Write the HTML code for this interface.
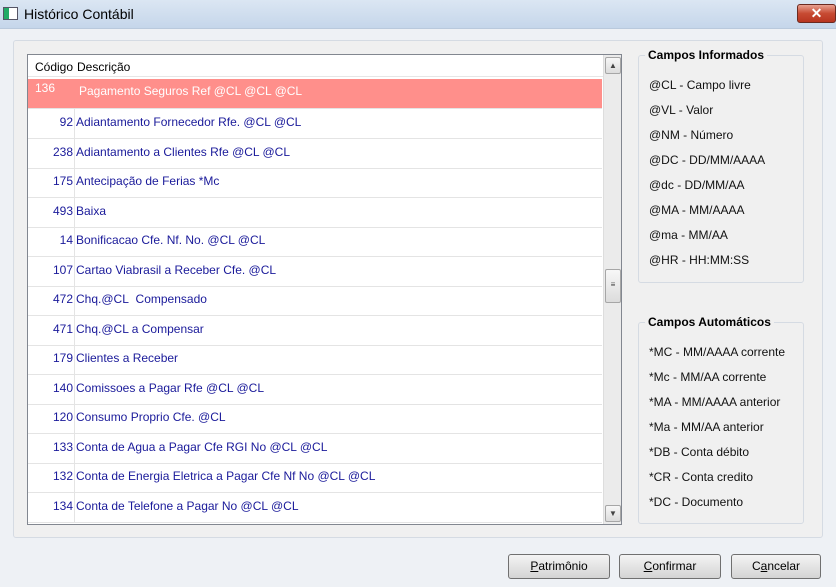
<!DOCTYPE html>
<html><head><meta charset="utf-8"><style>
*{margin:0;padding:0;box-sizing:border-box}
body{width:836px;height:587px;overflow:hidden;background:#f0f0f0;font-family:"Liberation Sans",sans-serif;font-size:12px;position:relative}
.title{position:absolute;left:0;top:0;width:836px;height:29px;background:linear-gradient(#dbe6f3,#c5d6ea);border-bottom:1px solid #b9c9dc}
.title span{position:absolute;left:24px;top:6px;font-size:14px;color:#000}
.ico{position:absolute;left:3px;top:7px;width:15px;height:13px;border:1px solid #556;background:linear-gradient(90deg,#2a6 0 40%,#fff 40%)}
.close{position:absolute;left:797px;top:4px;width:39px;height:19px;border:1px solid #6b2a20;border-radius:3px;background:linear-gradient(#e8a090,#c74a32 50%,#b83520);color:#fff;text-align:center;font-weight:bold;font-size:14px;line-height:17px}
.main{position:absolute;left:0;top:29px;width:836px;height:558px;background:#eef1f5}
.grp{position:absolute;left:13px;top:40px;width:810px;height:498px;border:1px solid #d5dbe3;border-radius:3px;background:#f0f0f0}
.grid{position:absolute;left:27px;top:54px;width:595px;height:471px;border:1px solid #828790;background:#fff;overflow:hidden}
.hdr{position:absolute;left:0;top:2px;height:20px;width:575px;line-height:20px;border-bottom:1px solid #e6e6e6}
.row{position:absolute;left:0;width:574px;height:30px;border-bottom:1px solid #e4e4e4;color:#1a1a9a;font-size:12px}
.row .c{position:absolute;left:0;width:45px;text-align:right;top:6px}
.row .d{position:absolute;left:48px;top:6px}
.row .sep{position:absolute;left:46px;top:0;height:30px;border-left:1px solid #e4e4e4}
.sel{background:#ff8f8b;color:#fff}
.sb{position:absolute;left:575px;top:0;width:18px;height:469px;background:#ebebeb;border-left:1px solid #ddd}
.sbb{position:absolute;left:1px;width:16px;height:17px;border:1px solid #a6a6a6;background:linear-gradient(#f7f7f7,#dcdcdc);border-radius:2px;font-size:8px;text-align:center;line-height:15px;color:#444}
.gb{position:absolute;left:638px;width:166px;border:1px solid #d5dbe3;border-radius:3px}
.gb h{position:absolute;left:6px;top:-8px;background:#f0f0f0;padding:0 3px;font-weight:bold;font-size:12px}
.gb p{position:absolute;left:10px;font-size:12px;color:#111}
.btn{position:absolute;top:554px;height:25px;border:1px solid #707070;border-radius:3px;background:linear-gradient(#f4f4f4,#e4e4e4 50%,#d4d4d4);text-align:center;line-height:23px;font-size:12px}
</style></head><body>
<div class="title"><div class="ico"></div><span>Histórico Contábil</span><div class="close">✕</div></div>
<div class="main"></div>
<div class="grp"></div>
<div class="grid">
<div class="hdr"><span style="position:absolute;left:7px">Código</span><span style="position:absolute;left:49px">Descrição</span></div>
<div class="row sel" style="top:24px"><span class="c" style="left:7px;width:auto;top:2px;text-align:left;color:#fff">136</span><span class="d" style="left:51px;top:5px;color:#fff">Pagamento Seguros Ref @CL @CL @CL</span></div>
<div class="row" style="top:54px"><span class="sep"></span><span class="c">92</span><span class="d">Adiantamento Fornecedor Rfe. @CL @CL</span></div>
<div class="row" style="top:84px"><span class="sep"></span><span class="c">238</span><span class="d">Adiantamento a Clientes Rfe @CL @CL</span></div>
<div class="row" style="top:113px"><span class="sep"></span><span class="c">175</span><span class="d">Antecipação de Ferias *Mc</span></div>
<div class="row" style="top:143px"><span class="sep"></span><span class="c">493</span><span class="d">Baixa</span></div>
<div class="row" style="top:172px"><span class="sep"></span><span class="c">14</span><span class="d">Bonificacao Cfe. Nf. No. @CL @CL</span></div>
<div class="row" style="top:202px"><span class="sep"></span><span class="c">107</span><span class="d">Cartao Viabrasil a Receber Cfe. @CL</span></div>
<div class="row" style="top:231px"><span class="sep"></span><span class="c">472</span><span class="d">Chq.@CL&nbsp; Compensado</span></div>
<div class="row" style="top:261px"><span class="sep"></span><span class="c">471</span><span class="d">Chq.@CL a Compensar</span></div>
<div class="row" style="top:290px"><span class="sep"></span><span class="c">179</span><span class="d">Clientes a Receber</span></div>
<div class="row" style="top:320px"><span class="sep"></span><span class="c">140</span><span class="d">Comissoes a Pagar Rfe @CL @CL</span></div>
<div class="row" style="top:349px"><span class="sep"></span><span class="c">120</span><span class="d">Consumo Proprio Cfe. @CL</span></div>
<div class="row" style="top:379px"><span class="sep"></span><span class="c">133</span><span class="d">Conta de Agua a Pagar Cfe RGI No @CL @CL</span></div>
<div class="row" style="top:408px"><span class="sep"></span><span class="c">132</span><span class="d">Conta de Energia Eletrica a Pagar Cfe Nf No @CL @CL</span></div>
<div class="row" style="top:438px"><span class="sep"></span><span class="c">134</span><span class="d">Conta de Telefone a Pagar No @CL @CL</span></div>
<div class="sb"><div class="sbb" style="top:2px">▲</div><div class="sbb" style="top:214px;height:34px;line-height:30px">≡</div><div class="sbb" style="top:450px">▼</div></div>
</div>
<div class="gb" style="top:55px;height:228px"><h>Campos Informados</h>
<p style="top:22px">@CL - Campo livre</p><p style="top:47px">@VL - Valor</p><p style="top:72px">@NM - Número</p><p style="top:97px">@DC - DD/MM/AAAA</p><p style="top:122px">@dc - DD/MM/AA</p><p style="top:147px">@MA - MM/AAAA</p><p style="top:172px">@ma - MM/AA</p><p style="top:197px">@HR - HH:MM:SS</p></div>
<div class="gb" style="top:322px;height:202px"><h>Campos Automáticos</h>
<p style="top:22px">*MC - MM/AAAA corrente</p><p style="top:47px">*Mc - MM/AA corrente</p><p style="top:72px">*MA - MM/AAAA anterior</p><p style="top:97px">*Ma - MM/AA anterior</p><p style="top:122px">*DB - Conta débito</p><p style="top:147px">*CR - Conta credito</p><p style="top:172px">*DC - Documento</p></div>
<div class="btn" style="left:508px;width:102px"><u>P</u>atrimônio</div>
<div class="btn" style="left:619px;width:102px"><u>C</u>onfirmar</div>
<div class="btn" style="left:731px;width:90px">C<u>a</u>ncelar</div>
</body></html>
